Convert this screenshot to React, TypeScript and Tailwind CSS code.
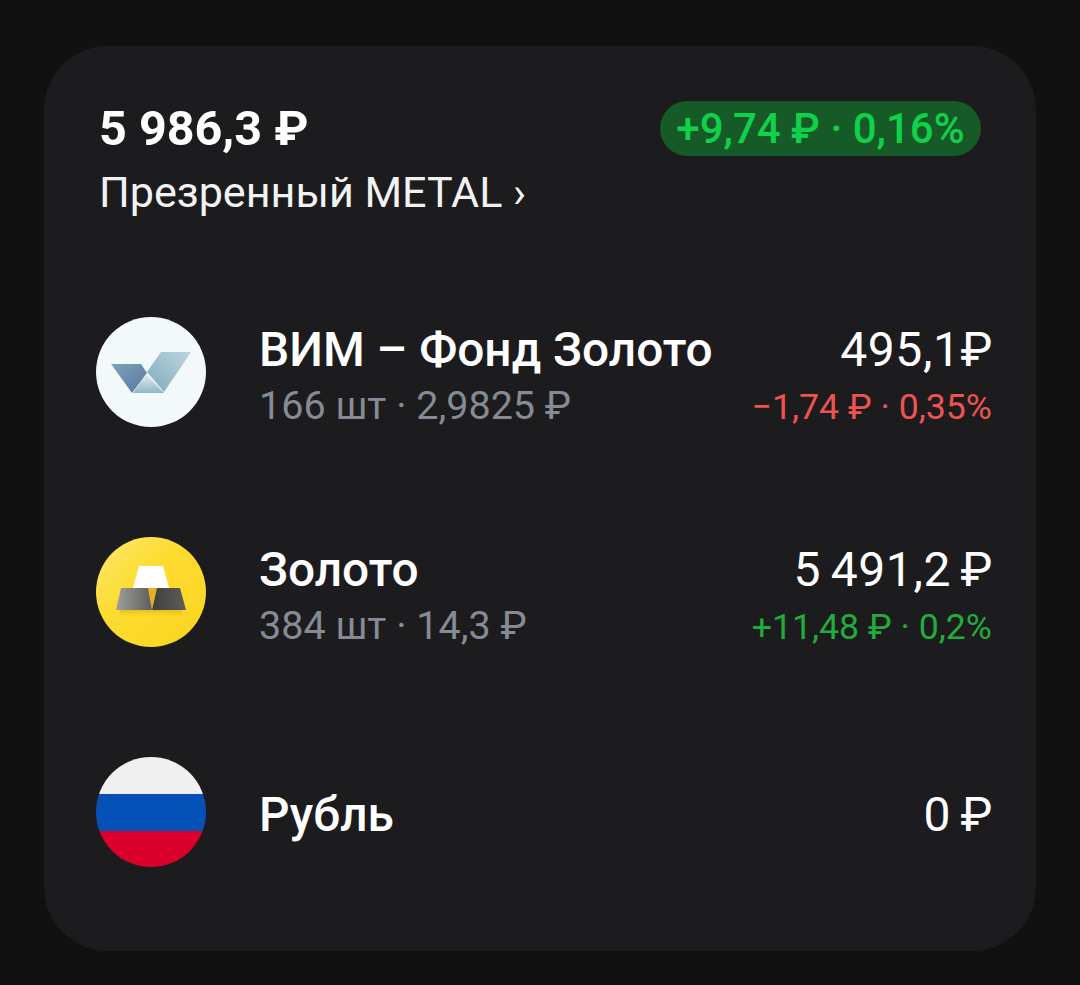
import React from 'react';

const VimIcon = () => (
  <svg viewBox="0 0 110 110" className="h-[110px] w-[110px]">
    <defs>
      <linearGradient id="vimLeft" x1="0" y1="0" x2="1" y2="1">
        <stop offset="0" stopColor="#7ea3bd" />
        <stop offset="1" stopColor="#56779f" />
      </linearGradient>
      <linearGradient id="vimRight" x1="1" y1="0" x2="0" y2="1">
        <stop offset="0" stopColor="#bcd5de" />
        <stop offset="1" stopColor="#7fabbd" />
      </linearGradient>
      <linearGradient id="vimMid" x1="0.5" y1="0" x2="0.5" y2="1">
        <stop offset="0" stopColor="#e4edf2" />
        <stop offset="1" stopColor="#8fb6c6" />
      </linearGradient>
    </defs>
    <circle cx="55" cy="55" r="55" fill="#f3f8fa" />
    <polygon points="15,47 45,47 51,56 36,76" fill="url(#vimLeft)" />
    <polygon points="51,55 65,35 95,35 68,75" fill="url(#vimRight)" />
    <polygon points="50,57 37,76 68,76" fill="url(#vimMid)" />
  </svg>
);

const GoldIcon = () => (
  <svg viewBox="0 0 110 110" className="h-[110px] w-[110px]">
    <defs>
      <linearGradient id="goldBg" x1="0" y1="0" x2="1" y2="1">
        <stop offset="0" stopColor="#fde872" />
        <stop offset="0.4" stopColor="#fddc30" />
        <stop offset="1" stopColor="#fbd420" />
      </linearGradient>
      <linearGradient id="barLeft" x1="0" y1="0" x2="1" y2="0">
        <stop offset="0" stopColor="#9e9e9a" />
        <stop offset="1" stopColor="#5e5e5c" />
      </linearGradient>
      <linearGradient id="barRight" x1="0" y1="0" x2="1" y2="0">
        <stop offset="0" stopColor="#3f3f3f" />
        <stop offset="1" stopColor="#5d5d5b" />
      </linearGradient>
      <linearGradient id="barShadow" x1="0" y1="0" x2="0" y2="1">
        <stop offset="0" stopColor="#c9a216" stopOpacity="0.45" />
        <stop offset="1" stopColor="#e0bb1c" stopOpacity="0" />
      </linearGradient>
    </defs>
    <circle cx="55" cy="55" r="55" fill="url(#goldBg)" />
    <rect x="24" y="73" width="62" height="7" fill="url(#barShadow)" />
    <polygon points="43,29 67,29 73,51 37,51" fill="#ffffff" />
    <polygon points="52,51 61,51 56,73" fill="#e6b021" />
    <polygon points="25,51 52,51 56,73 20,73" fill="url(#barLeft)" />
    <polygon points="61,51 84,51 90,73 56,73" fill="url(#barRight)" />
  </svg>
);

const FlagIcon = () => (
  <div className="flex h-[110px] w-[110px] flex-col overflow-hidden rounded-full">
    <div className="h-[37px] bg-[#f0f0f0]" />
    <div className="h-[37px] bg-[#0551b8]" />
    <div className="h-[36px] bg-[#d9002b]" />
  </div>
);

interface Asset {
  icon: React.ReactNode;
  name: string;
  sub?: string;
  value: string;
  change?: string;
  changeColor?: string;
}

const assets: Asset[] = [
  {
    icon: <VimIcon />,
    name: 'ВИМ – Фонд Золото',
    sub: '166 шт · 2,9825 ₽',
    value: '495,1₽',
    change: '−1,74 ₽ · 0,35%',
    changeColor: 'text-[#ef5350]',
  },
  {
    icon: <GoldIcon />,
    name: 'Золото',
    sub: '384 шт · 14,3 ₽',
    value: '5 491,2 ₽',
    change: '+11,48 ₽ · 0,2%',
    changeColor: 'text-[#22ac3c]',
  },
  {
    icon: <FlagIcon />,
    name: 'Рубль',
    value: '0 ₽',
  },
];

export default function App() {
  return (
    <div className="h-[985px] w-[1080px] bg-[#111112] pt-[46px] pl-[44px] font-['Roboto',sans-serif]">
      <div className="h-[905px] w-[992px] rounded-[64px] bg-[#1c1c1e]">
        <div className="flex items-start justify-between pt-[55px] pr-[55px] pl-[55px]">
          <div>
            <div className="text-[48.5px] leading-[55px] font-bold text-white">5 986,3 ₽</div>
            <div className="mt-[12px] text-[43.1px] leading-[50px] text-[#f2f2f2]">Презренный METAL ›</div>
          </div>
          <div className="flex h-[55px] w-[321px] items-center justify-center rounded-full bg-[#165a28] text-[42px] font-medium text-[#0fd14a]">
            +9,74 ₽ · 0,16%
          </div>
        </div>
        <div className="mt-[99px] flex flex-col gap-[110px] pr-[44px] pl-[52px]">
          {assets.map((asset) => (
            <div key={asset.name} className="flex h-[110px] items-center">
              <div className="shrink-0">{asset.icon}</div>
              <div className="ml-[53px] flex-1 pt-[6px]">
                <div className="text-[47.8px] leading-[56px] font-medium text-white">{asset.name}</div>
                {asset.sub && <div className="-mb-[4px] pt-[1px] text-[39.5px] leading-[54px] text-[#868a94]">{asset.sub}</div>}
              </div>
              <div className="pt-[6px] text-right">
                <div className="-mr-[1px] text-[48px] leading-[56px] tracking-[0.6px] text-white [word-spacing:-3px]">{asset.value}</div>
                {asset.change && <div className={`-mb-[8px] text-[35.7px] leading-[58px] ${asset.changeColor}`}>{asset.change}</div>}
              </div>
            </div>
          ))}
        </div>
      </div>
    </div>
  );
}
